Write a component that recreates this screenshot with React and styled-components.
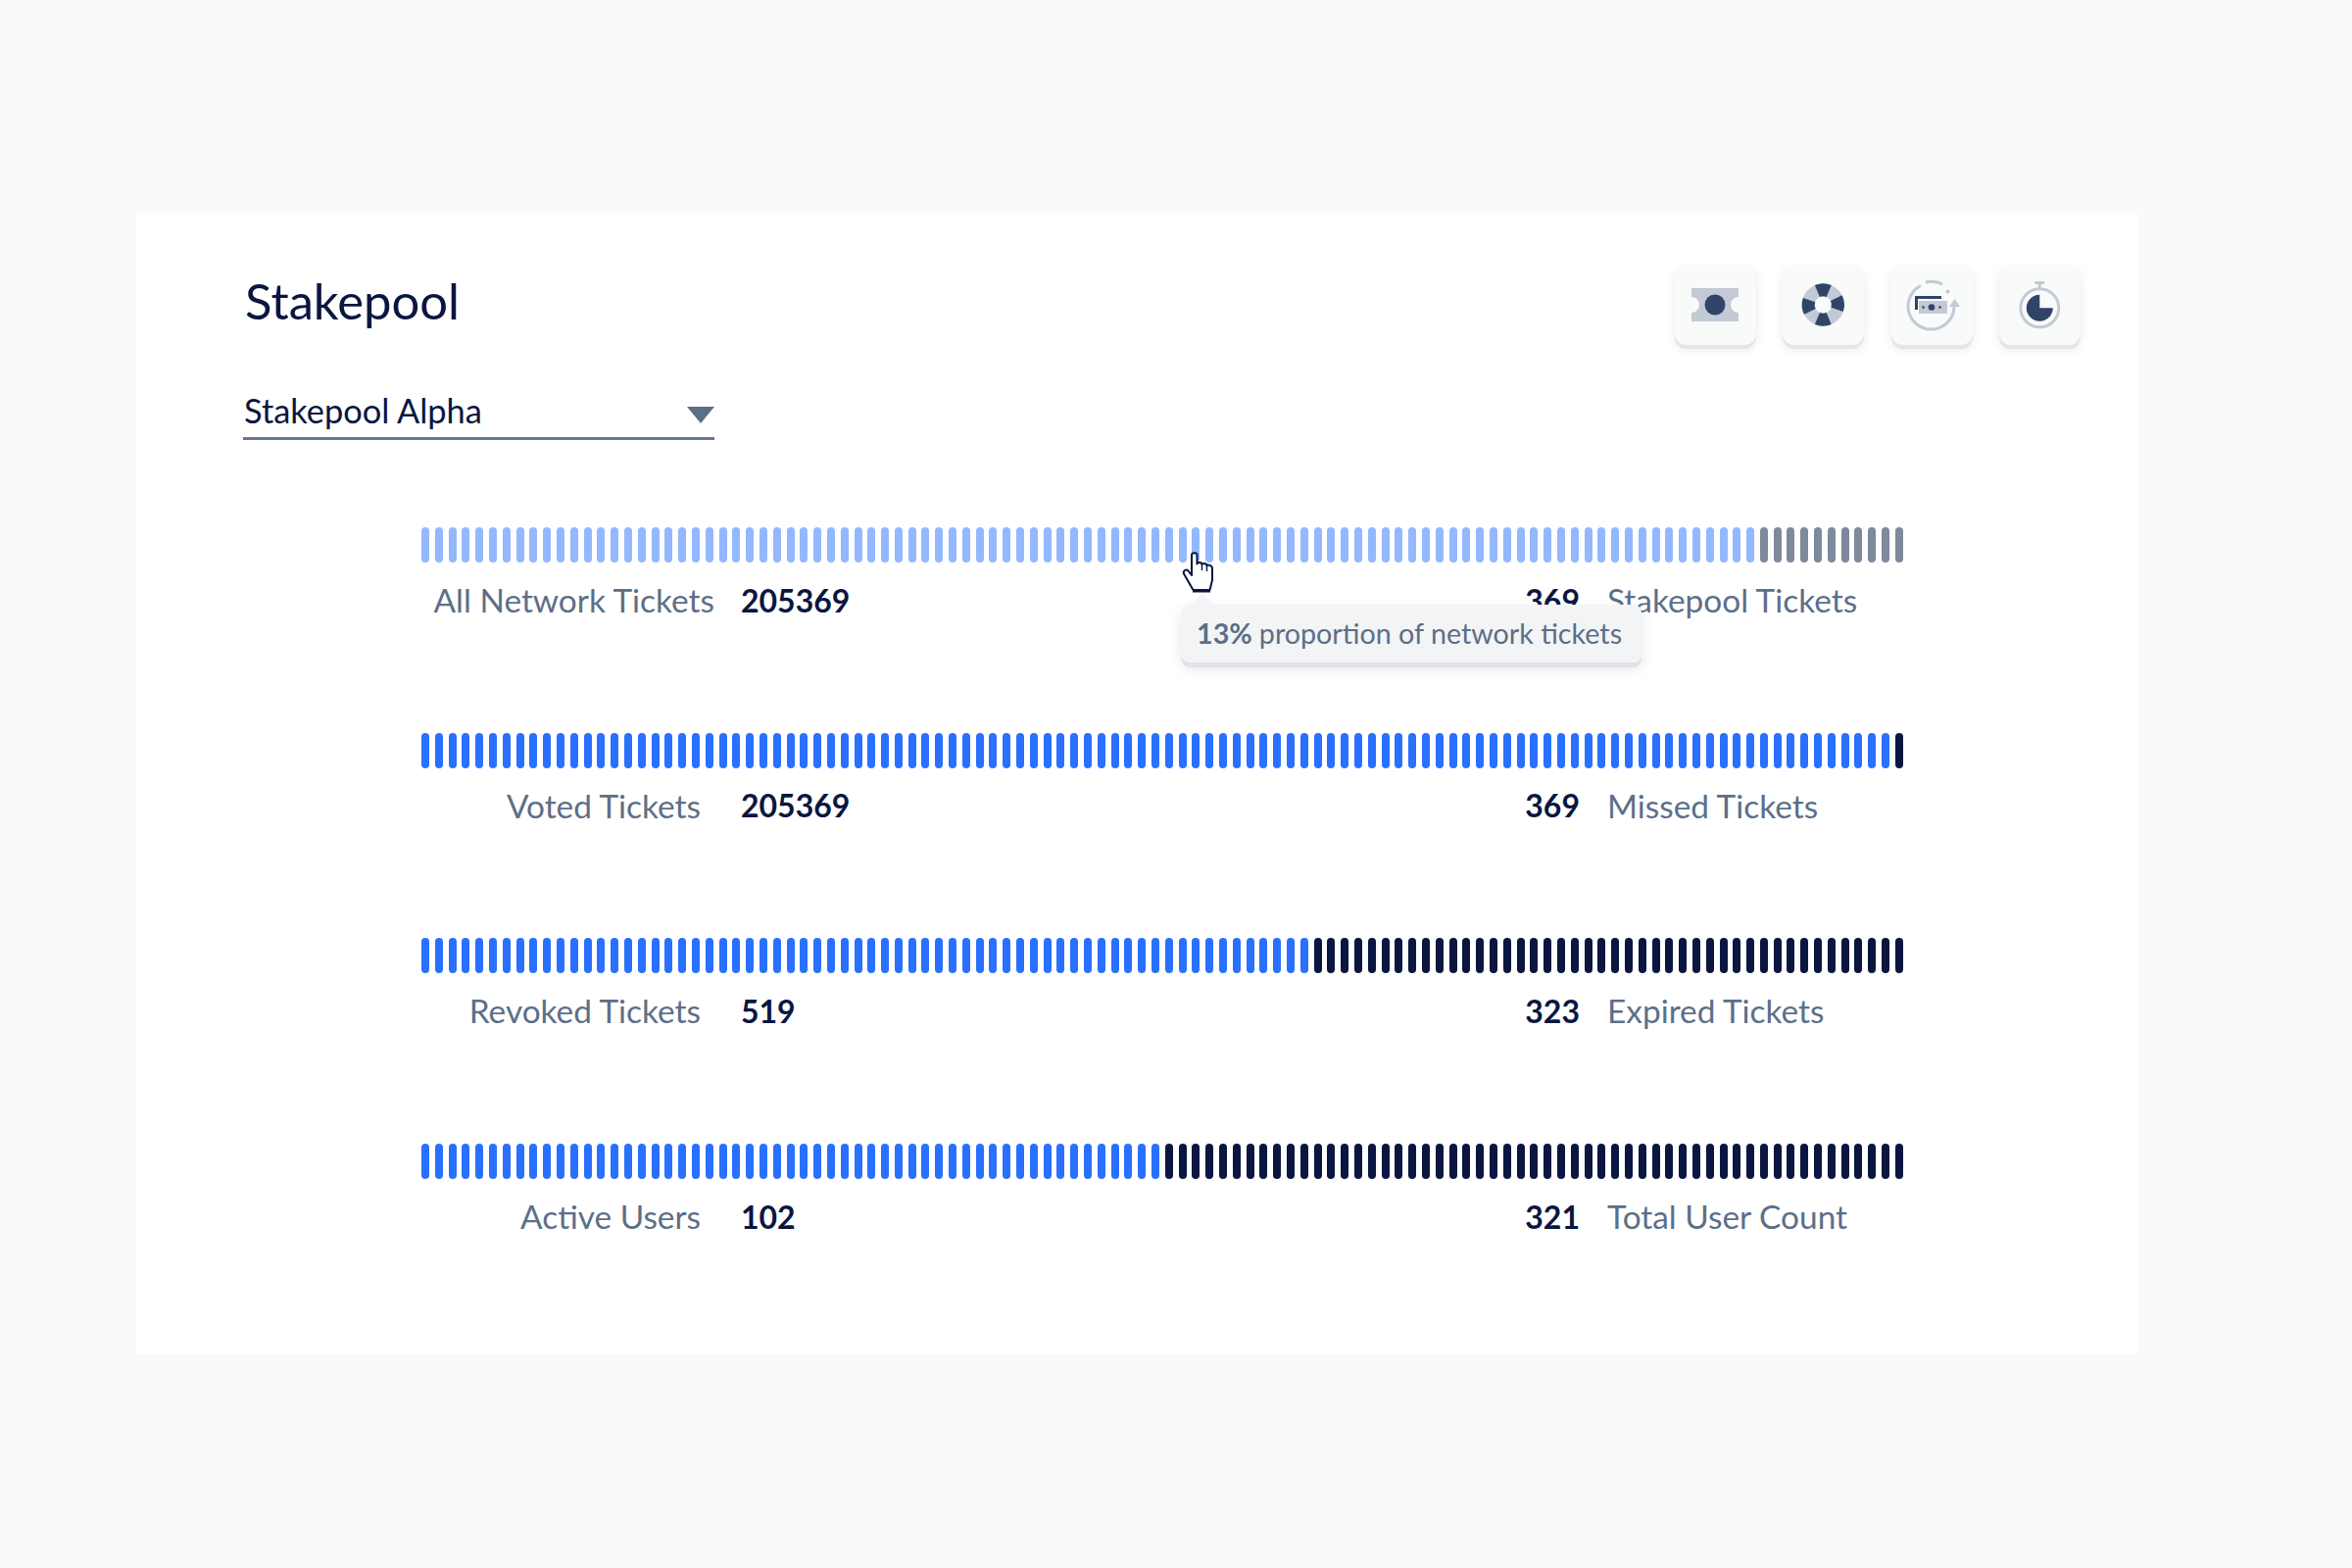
import React from 'react'
import styled, { createGlobalStyle } from 'styled-components'

const navy = '#0a1640'
const slate = '#5c6f88'
const BAR_COUNT = 110

const rows = [
  { left: 'All Network Tickets', leftValue: '205369', rightValue: '369', right: 'Stakepool Tickets', filled: 99, fill: '#93b8ff', rest: '#7f899c', wide: true },
  { left: 'Voted Tickets', leftValue: '205369', rightValue: '369', right: 'Missed Tickets', filled: 109, fill: '#2970ff', rest: navy },
  { left: 'Revoked Tickets', leftValue: '519', rightValue: '323', right: 'Expired Tickets', filled: 66, fill: '#2970ff', rest: navy },
  { left: 'Active Users', leftValue: '102', rightValue: '321', right: 'Total User Count', filled: 55, fill: '#2970ff', rest: navy },
]

const GlobalStyle = createGlobalStyle`
  html, body {
    margin: 0;
    background: #f9fafa;
    font-family: Lato, "Noto Sans", sans-serif;
  }
`

const Page = styled.div`
  width: 2400px;
  height: 1600px;
  padding: 217px 0 0 139px;
  box-sizing: border-box;
`

const Card = styled.section`
  width: 2042px;
  height: 1164px;
  background: #fff;
  padding: 50px 58px 0 109px;
  box-sizing: border-box;
`

const Header = styled.header`
  display: flex;
  justify-content: space-between;
  align-items: flex-start;
`

const Title = styled.h1`
  margin: 10px 0 0 2px;
  font-size: 50.8px;
  line-height: 60px;
  font-weight: 400;
  color: ${navy};
`

const IconRow = styled.div`
  display: flex;
  gap: 27.3px;
  margin-top: 3px;
`

const IconCard = styled.div`
  width: 83px;
  height: 82px;
  border-radius: 12px;
  background: #f9fafa;
  box-shadow: 0 4px 0 #e3e5e8, 0 5px 10px rgba(60, 70, 90, 0.12);
  svg {
    display: block;
  }
`

const Select = styled.div`
  display: flex;
  align-items: center;
  justify-content: space-between;
  width: 481px;
  height: 52px;
  margin-top: 45px;
  padding: 0 0 7px 1px;
  border-bottom: 3px solid #66778f;
  box-sizing: border-box;
  font-size: 34.4px;
  color: ${navy};
`

const Caret = styled.span`
  width: 0;
  height: 0;
  margin-top: 11px;
  border-left: 14px solid transparent;
  border-right: 14px solid transparent;
  border-top: 17px solid ${slate};
`

const Rows = styled.div`
  display: flex;
  flex-direction: column;
  gap: 115.7px;
  margin: 89px 0 0 182px;
  width: 1512px;
`

const Row = styled.div`
  position: relative;
`

const Bars = styled.div`
  display: flex;
  justify-content: space-between;
  height: 36px;
`

const Bar = styled.span`
  width: 8px;
  height: 36px;
  border-radius: 4px;
  background: ${p => p.$color};
`

const Legend = styled.div`
  display: flex;
  align-items: center;
  height: 40px;
  margin-top: 18px;
  font-size: 33.4px;
`

const LeftLabel = styled.span`
  width: 299px;
  padding-right: ${p => (p.$wide ? 0 : 14)}px;
  box-sizing: border-box;
  text-align: right;
  white-space: nowrap;
  color: ${slate};
`

const Value = styled.b`
  font-size: 32px;
  font-weight: 700;
  color: ${navy};
`

const LeftValue = styled(Value)`
  margin-left: 27px;
`

const RightValue = styled(Value)`
  margin-left: auto;
`

const RightLabel = styled.span`
  width: 302px;
  margin-left: 28px;
  white-space: nowrap;
  color: ${slate};
`

const Cursor = styled.svg`
  position: absolute;
  left: 776px;
  top: 25px;
  width: 33px;
  height: 43px;
`

const Tooltip = styled.div`
  position: absolute;
  left: 776px;
  top: 79px;
  width: 469px;
  height: 59px;
  padding: 0 0 2px 15px;
  box-sizing: border-box;
  display: flex;
  align-items: center;
  gap: 7px;
  border-radius: 8px;
  background: #f3f4f6;
  box-shadow: 0 5px 0 #e2e3e6, 0 6px 14px rgba(60, 70, 90, 0.14);
  font-size: 28.7px;
  white-space: nowrap;
  color: ${slate};
  &::before {
    content: '';
    position: absolute;
    left: 10px;
    top: -11px;
    border-left: 11px solid transparent;
    border-right: 11px solid transparent;
    border-bottom: 11px solid #f3f4f6;
  }
`

const sector = (cx, cy, r1, r2, mid, half) => {
  const pt = (r, a) => `${(cx + r * Math.cos((a * Math.PI) / 180)).toFixed(2)} ${(cy + r * Math.sin((a * Math.PI) / 180)).toFixed(2)}`
  return `M${pt(r1, mid - half)} A${r1} ${r1} 0 0 1 ${pt(r1, mid + half)} L${pt(r2, mid + half)} A${r2} ${r2} 0 0 0 ${pt(r2, mid - half)} Z`
}

const LIGHT = '#c3cad5'
const DARK = '#2f4468'

const TicketIcon = () => (
  <svg width="83" height="82" viewBox="0 0 83 82">
    <path fill={LIGHT} d="M17 24H65V33A8 8 0 0 0 65 49V58H17V49A8 8 0 0 0 17 33Z" />
    <circle cx="41" cy="41" r="10.5" fill={DARK} />
  </svg>
)

const BuoyIcon = () => (
  <svg width="83" height="82" viewBox="0 0 83 82">
    <path fill={LIGHT} fillRule="evenodd" d="M41.3 19.5a21.6 21.6 0 1 0 .01 0ZM41.3 32.5a8.6 8.6 0 1 1-.01 0Z" />
    {[-90, 0, 90, 180].map(a => (
      <path key={a} fill={DARK} d={sector(41.3, 41, 21.6, 8.6, a + (a === 0 || a === 180 ? -4 : 0), 23)} />
    ))}
  </svg>
)

const MoneyIcon = () => (
  <svg width="83" height="82" viewBox="0 0 83 82">
    <path fill="none" stroke={LIGHT} strokeWidth="3" d="M30 21.5A23.5 23.5 0 1 0 64 42" />
    <path fill="none" stroke={LIGHT} strokeWidth="3" d="M35 18A23.5 23.5 0 0 1 52 20" />
    <path fill={LIGHT} d="M57.5 25l2.5 2.5-2.5 2.5-2.5-2.5ZM64.5 35l5.5 8h-11Z" />
    <path fill={DARK} d="M24 32H51V35H27V46H24Z" />
    <rect x="28" y="37" width="29" height="13" fill={LIGHT} />
    <circle cx="41" cy="43.5" r="3.3" fill={DARK} />
    <circle cx="32.5" cy="43.5" r="1.3" fill={DARK} />
    <circle cx="49.5" cy="43.5" r="1.3" fill={DARK} />
  </svg>
)

const TimerIcon = () => (
  <svg width="83" height="82" viewBox="0 0 83 82">
    <circle cx="41.3" cy="44.3" r="19.5" fill="none" stroke={LIGHT} strokeWidth="3" />
    <path fill={LIGHT} d="M36.3 17h10v3h-3.5v6h-3v-6h-3.5Z" />
    <path fill={DARK} d="M41.3 44.3V30.8A13.5 13.5 0 1 0 54.8 44.3Z" />
  </svg>
)

const HandCursor = () => (
  <Cursor viewBox="0 0 33 43">
    <path
      fill="#fff"
      stroke={navy}
      strokeWidth="2"
      strokeLinejoin="round"
      d="M10 17V3.2C10 .6 15.5 .6 15.5 3.2V12.5C16 10.5 20.5 10.5 20.500 13C21 11.500 25.500 11.500 25.500 14.500C26 13 31 13.500 31 17V29L28.500 39H11.500L2 22.500C1 19.500 4 17 6.500 19.500L10 24Z"
    />
    <path fill={navy} d="M11 38.500H29V41.500H11Z" />
    <path stroke={navy} strokeWidth="1.400" d="M20.500 13V19M25.500 14.500V20" />
  </Cursor>
)

const App = () => (
  <Page>
    <GlobalStyle />
    <Card>
      <Header>
        <Title>Stakepool</Title>
        <IconRow>
          <IconCard><TicketIcon /></IconCard>
          <IconCard><BuoyIcon /></IconCard>
          <IconCard><MoneyIcon /></IconCard>
          <IconCard><TimerIcon /></IconCard>
        </IconRow>
      </Header>
      <Select>
        Stakepool Alpha
        <Caret />
      </Select>
      <Rows>
        {rows.map((row, r) => (
          <Row key={row.left}>
            <Bars>
              {Array.from({ length: BAR_COUNT }, (_, i) => (
                <Bar key={i} $color={i < row.filled ? row.fill : row.rest} />
              ))}
            </Bars>
            <Legend>
              <LeftLabel $wide={row.wide}>{row.left}</LeftLabel>
              <LeftValue>{row.leftValue}</LeftValue>
              <RightValue>{row.rightValue}</RightValue>
              <RightLabel>{row.right}</RightLabel>
            </Legend>
            {r === 0 && (
              <>
                <HandCursor />
                <Tooltip><b>13%</b> proportion of network tickets</Tooltip>
              </>
            )}
          </Row>
        ))}
      </Rows>
    </Card>
  </Page>
)

export default App
